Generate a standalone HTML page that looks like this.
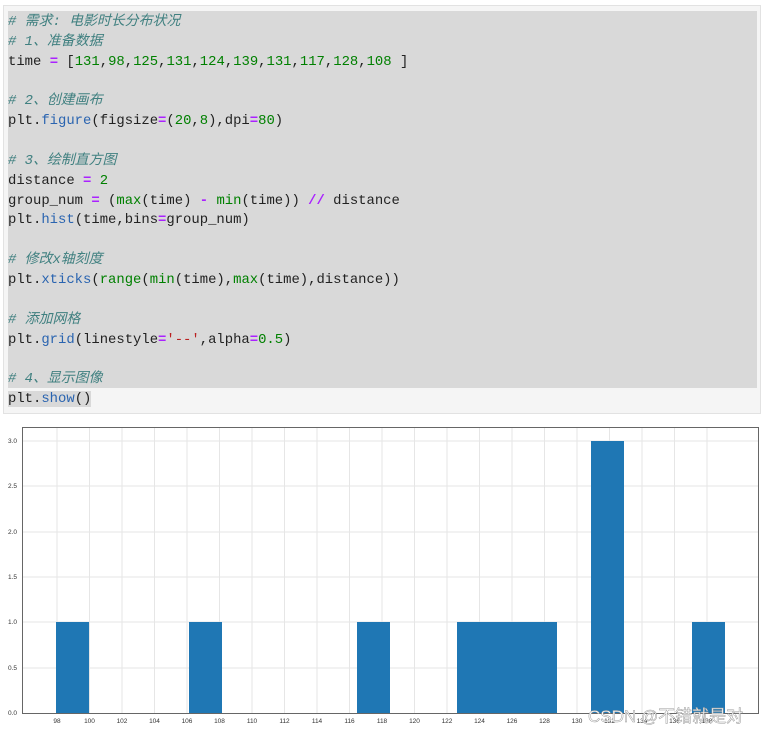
<!DOCTYPE html>
<html><head><meta charset="utf-8"><style>
body{margin:0;background:#fff;width:774px;height:735px;overflow:hidden;position:relative}
.box{position:absolute;left:3px;top:5px;width:758px;height:409px;background:#f5f5f5;border:1px solid #e2e2e2;box-sizing:border-box}
.code{position:absolute;left:8px;top:11px;width:749px;height:377px;background:#d9d9d9}
pre{position:absolute;left:8px;top:13px;margin:0;font-family:"Liberation Mono","Noto Sans CJK SC",monospace;font-size:13.9px;line-height:19.85px;color:#222}
.c{color:#408080;font-style:italic}.o{color:#aa22ff;font-weight:bold}.n{color:#008000}.f{color:#2a64b0}.b{color:#008000}.s{color:#ba2121}
.hl{background:#d9d9d9}
svg{position:absolute;left:0;top:0}
</style></head><body>
<div class="box"></div><div class="code"></div>
<pre><span class="c"># 需求: 电影时长分布状况</span>
<span class="c"># 1、准备数据</span>
time <span class="o">=</span> [<span class="n">131</span>,<span class="n">98</span>,<span class="n">125</span>,<span class="n">131</span>,<span class="n">124</span>,<span class="n">139</span>,<span class="n">131</span>,<span class="n">117</span>,<span class="n">128</span>,<span class="n">108</span> ]

<span class="c"># 2、创建画布</span>
plt.<span class="f">figure</span>(figsize<span class="o">=</span>(<span class="n">20</span>,<span class="n">8</span>),dpi<span class="o">=</span><span class="n">80</span>)

<span class="c"># 3、绘制直方图</span>
distance <span class="o">=</span> <span class="n">2</span>
group_num <span class="o">=</span> (<span class="b">max</span>(time) <span class="o">-</span> <span class="b">min</span>(time)) <span class="o">//</span> distance
plt.<span class="f">hist</span>(time,bins<span class="o">=</span>group_num)

<span class="c"># 修改x轴刻度</span>
plt.<span class="f">xticks</span>(<span class="b">range</span>(<span class="b">min</span>(time),<span class="b">max</span>(time),distance))

<span class="c"># 添加网格</span>
plt.<span class="f">grid</span>(linestyle<span class="o">=</span><span class="s">'--'</span>,alpha<span class="o">=</span><span class="n">0.5</span>)

<span class="c"># 4、显示图像</span>
<span class="hl">plt.<span class="f">show</span>()</span></pre>
<svg width="774" height="735" xmlns="http://www.w3.org/2000/svg" font-family="Liberation Sans, sans-serif">
<g stroke="#e6e6e6" stroke-width="1">
<line x1="22" x2="759" y1="441" y2="441"/><line x1="22" x2="759" y1="486" y2="486"/><line x1="22" x2="759" y1="532" y2="532"/><line x1="22" x2="759" y1="577" y2="577"/><line x1="22" x2="759" y1="622" y2="622"/><line x1="22" x2="759" y1="668" y2="668"/>
<line x1="57" x2="57" y1="427" y2="713"/><line x1="89.5" x2="89.5" y1="427" y2="713"/><line x1="122" x2="122" y1="427" y2="713"/><line x1="154.5" x2="154.5" y1="427" y2="713"/><line x1="187" x2="187" y1="427" y2="713"/><line x1="219.5" x2="219.5" y1="427" y2="713"/><line x1="252" x2="252" y1="427" y2="713"/><line x1="284.5" x2="284.5" y1="427" y2="713"/><line x1="317" x2="317" y1="427" y2="713"/><line x1="349.5" x2="349.5" y1="427" y2="713"/><line x1="382" x2="382" y1="427" y2="713"/><line x1="414.5" x2="414.5" y1="427" y2="713"/><line x1="447" x2="447" y1="427" y2="713"/><line x1="479.5" x2="479.5" y1="427" y2="713"/><line x1="512" x2="512" y1="427" y2="713"/><line x1="544.5" x2="544.5" y1="427" y2="713"/><line x1="577" x2="577" y1="427" y2="713"/><line x1="609.5" x2="609.5" y1="427" y2="713"/><line x1="642" x2="642" y1="427" y2="713"/><line x1="674.5" x2="674.5" y1="427" y2="713"/><line x1="707" x2="707" y1="427" y2="713"/>
</g>
<g fill="#1f77b4">
<rect x="56" y="622" width="33" height="91"/>
<rect x="189" y="622" width="33" height="91"/>
<rect x="357" y="622" width="33" height="91"/>
<rect x="457" y="622" width="100" height="91"/>
<rect x="591" y="441" width="33" height="272"/>
<rect x="692" y="622" width="33" height="91"/>
</g>
<rect x="22.5" y="427.5" width="736" height="286" fill="none" stroke="#666" stroke-width="1"/>
<g font-size="6.5" fill="#333" text-anchor="end">
<text x="17" y="443">3.0</text><text x="17" y="488">2.5</text><text x="17" y="534">2.0</text><text x="17" y="579">1.5</text><text x="17" y="624">1.0</text><text x="17" y="670">0.5</text><text x="17" y="715">0.0</text>
</g>
<g font-size="6.5" fill="#333" text-anchor="middle">
<text x="57" y="723">98</text><text x="89.5" y="723">100</text><text x="122" y="723">102</text><text x="154.5" y="723">104</text><text x="187" y="723">106</text><text x="219.5" y="723">108</text><text x="252" y="723">110</text><text x="284.5" y="723">112</text><text x="317" y="723">114</text><text x="349.5" y="723">116</text><text x="382" y="723">118</text><text x="414.5" y="723">120</text><text x="447" y="723">122</text><text x="479.5" y="723">124</text><text x="512" y="723">126</text><text x="544.5" y="723">128</text><text x="577" y="723">130</text><text x="609.5" y="723">132</text><text x="642" y="723">134</text><text x="674.5" y="723">136</text><text x="707" y="723">138</text>
</g>
<text x="588" y="722" font-size="17" fill="#fff" stroke="#999" stroke-width="0.5" font-family="Liberation Sans, Noto Sans CJK SC, sans-serif">CSDN @不错就是对</text>
</svg>
</body></html>
